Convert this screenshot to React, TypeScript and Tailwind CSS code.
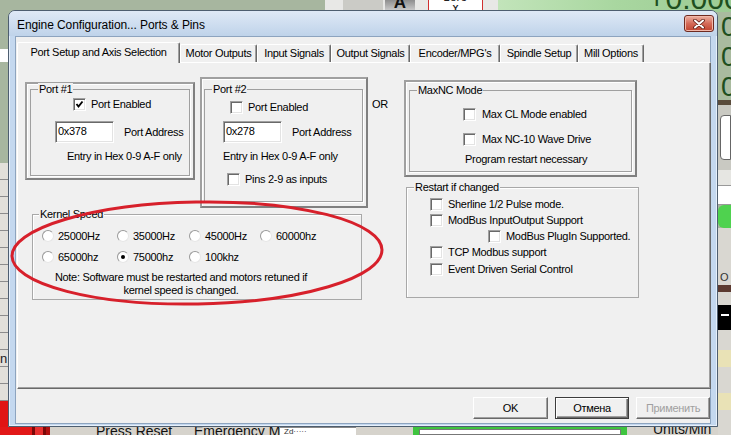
import React from "react";

function Check({ checked = false }: { checked?: boolean }) {
  return (
    <span className="relative inline-block w-[13px] h-[13px] shrink-0 bg-white border border-t-[#a0a0a0] border-l-[#a0a0a0] border-r-white border-b-white shadow-[inset_1px_1px_0_#696969,inset_-1px_-1px_0_#e3e3e3]">
      {checked && (
        <svg className="absolute left-[1px] top-[1px]" width="9" height="9" viewBox="0 0 9 9">
          <path d="M1.5 4 L3.5 6.5 L7.5 1.5" stroke="#000" strokeWidth="1.9" fill="none" />
        </svg>
      )}
    </span>
  );
}

function Radio({ checked = false }: { checked?: boolean }) {
  return (
    <span className="inline-flex items-center justify-center w-[12px] h-[12px] shrink-0 rounded-full bg-white border border-t-[#9a9a9a] border-l-[#9a9a9a] border-r-[#e6e6e6] border-b-[#e6e6e6]">
      {checked && <span className="w-[4px] h-[4px] rounded-full bg-black" />}
    </span>
  );
}

function CheckRow({ label, checked = false, cls = "" }: { label: string; checked?: boolean; cls?: string }) {
  return (
    <div className={"flex items-center gap-[5px] h-[13px] " + cls}>
      <Check checked={checked} />
      <span className="whitespace-nowrap">{label}</span>
    </div>
  );
}

function RadioCell({ label, checked = false, w }: { label: string; checked?: boolean; w: string }) {
  return (
    <div className={"flex items-center gap-[4px] " + w}>
      <Radio checked={checked} />
      <span className="whitespace-nowrap">{label}</span>
    </div>
  );
}

function TextBox({ value }: { value: string }) {
  return (
    <div className="w-[59px] h-[22px] bg-white border border-t-[#a0a0a0] border-l-[#a0a0a0] border-r-white border-b-white shadow-[inset_1px_1px_0_#696969,inset_-1px_-1px_0_#e3e3e3] pl-[2px] pt-[3px]">
      {value}
    </div>
  );
}

function Label({ text, cls }: { text: string; cls: string }) {
  return <span className={"absolute -top-[7px] px-[1px] bg-[#f0f0f0] whitespace-nowrap leading-[13px] " + cls}>{text}</span>;
}

const tabs = [
  { label: "Motor Outputs", w: "w-[77px]" },
  { label: "Input Signals", w: "w-[74px]" },
  { label: "Output Signals", w: "w-[79px]" },
  { label: "Encoder/MPG's", w: "w-[90px]" },
  { label: "Spindle Setup", w: "w-[78px]" },
  { label: "Mill Options", w: "w-[66px]" },
];

function Background() {
  return (
    <>
      {/* top strip */}
      <div className="absolute left-[325px] top-0 w-[175px] h-[12px] bg-[#e8e8e6]" />
      <div className="absolute left-[343px] top-0 w-[40px] h-[12px] bg-[#cbcbc6]" />
      <div className="absolute left-[385px] top-0 w-[30px] h-[12px] bg-gradient-to-b from-[#8e8e8e] to-[#d4d4d4] flex justify-center overflow-hidden">
        <span className="text-[17px] font-bold leading-[17px] -mt-[6px] text-[#111]">A</span>
      </div>
      <div className="absolute left-[428px] top-0 w-[55px] h-[12px] bg-white border-x border-[#d03030] flex flex-col items-center overflow-hidden">
        <span className="text-[12px] leading-[12px] -mt-[9px] text-[#222]">zero</span>
        <span className="text-[9px] font-bold leading-[9px] mt-[1px] text-[#222]">Y</span>
      </div>
      <div className="absolute left-[498px] top-0 w-[233px] h-[12px] bg-gradient-to-r from-[#c2e4ba] via-[#a9d7a0] to-[#9ccb94] overflow-hidden">
        <span className="absolute left-[150px] -top-[16px] text-[30px] leading-[30px] text-[#1e4f1e] whitespace-nowrap">+0.000</span>
      </div>

      {/* left strip */}
      <div className="absolute left-0 top-0 w-[8px] h-[435px] flex flex-col">
        <div className="h-[49px]" />
        <div className="h-[13px] bg-white" />
        <div className="h-[101px]" />
        <div className="flex flex-col bg-[#e2e0da]">
          {Array.from({ length: 14 }).map((_, i) => (
            <div key={i} className="h-[17px] border-b border-[#8c8c8c] overflow-hidden text-[13px] leading-[17px] text-[#222]">
              {i === 11 ? "n" : ""}
            </div>
          ))}
        </div>
        <div className="flex-1 bg-[#e01414]" />
      </div>

      {/* bottom strip */}
      <div className="absolute left-0 top-[427px] w-[731px] h-[8px] flex bg-[#d6d3cc] overflow-hidden">
        <div className="w-[32px] bg-[#e21818]" />
        <div className="w-[3px] bg-[#7a0808]" />
        <div className="w-[8px] bg-[#e83030]" />
        <div className="w-[3px] bg-[#7a0808]" />
        <div className="w-[4px] bg-[#b01010]" />
        <div className="w-[46px]" />
        <span className="text-[14px] leading-[14px] -mt-[3px] text-[#111] whitespace-nowrap w-[98px]">Press Reset</span>
        <span className="text-[14px] leading-[14px] -mt-[3px] text-[#111] whitespace-nowrap w-[86px] overflow-hidden">Emergency M</span>
        <div className="w-[76px] bg-white border-t border-[#888] text-[8px] leading-[8px] pl-[4px] text-[#333]">Zd·····</div>
        <div className="w-[57px]" />
        <div className="w-[214px] bg-[#3fc43f] px-[6px] pt-[2px]">
          <div className="h-full bg-white border border-[#777]" />
        </div>
        <div className="w-[26px]" />
        <span className="text-[14px] leading-[14px] -mt-[5px] text-[#111] whitespace-nowrap">Units/Min</span>
      </div>

      {/* right strip */}
      <div className="absolute left-[718px] top-0 w-[13px] h-[435px] flex flex-col overflow-hidden">
        <div className="h-[12px]" />
        <div className="h-[88px] bg-[#a9bb9f] flex flex-col overflow-hidden pl-[3px] pt-[2px] gap-[4px]">
          <span className="text-[28px] leading-[26px] text-[#1e4f1e]">0</span>
          <span className="text-[28px] leading-[26px] text-[#1e4f1e]">0</span>
          <span className="text-[28px] leading-[26px] text-[#1e4f1e]">0</span>
        </div>
        <div className="h-[5px] bg-[#5a4c3c]" />
        <div className="h-[65px] bg-[#c9c9c2] pt-[10px] pl-[2px]">
          <div className="h-[45px] bg-white rounded-l-[4px] border border-[#666]" />
        </div>
        <div className="h-[15px] bg-[#e6e6e2]" />
        <div className="h-[20px] bg-white border-y border-[#999]" />
        <div className="h-[23px] bg-[#4fd24f] rounded-l-[6px]" />
        <div className="h-[57px] bg-[#d9d7d1] text-[11px] leading-[11px] pt-[44px] pl-[2px] text-[#333]">O</div>
        <div className="h-[7px] bg-[#5c3a30]" />
        <div className="h-[13px] bg-[#d9d7d1]" />
        <div className="h-[25px] bg-black pl-[3px] pt-[9px]">
          <div className="h-[2px] w-[8px] bg-white" />
        </div>
        <div className="h-[20px] bg-[#d9d7d1]" />
        <div className="h-[17px] bg-[#e9e2b6]" />
        <div className="h-[26px] bg-[#d9d7d1]" />
        <div className="h-[17px] bg-[#e9e2b6]" />
        <div className="flex-1 bg-[#d9d7d1]" />
      </div>
    </>
  );
}

export default function App() {
  return (
    <div className="relative w-[731px] h-[435px] overflow-hidden bg-[#a7b69f] font-['Liberation_Sans',Arial,sans-serif]">
      <Background />

      {/* Dialog window */}
      <div className="absolute left-[8px] top-[10px] w-[710px] h-[417px] flex flex-col rounded-t-[7px] border border-[#4e5e70] bg-[#c4d8ef] shadow-[inset_0_0_0_1px_#e6f0fb]">
        {/* title bar */}
        <div className="h-[25px] flex items-start justify-between rounded-t-[6px] bg-gradient-to-b from-[#dfe9f6] to-[#bfd3ea]">
          <span className="ml-[8px] mt-[7px] text-[12px] leading-[14px] tracking-[-0.1px] text-black">Engine Configuration... Ports &amp; Pins</span>
          <div className="mr-[3px] mt-[4px] w-[30px] h-[17px] rounded-[3px] border border-[#6e2a20] bg-gradient-to-b from-[#eab1a4] via-[#d46a58] to-[#c0422e] flex items-center justify-center shadow-[inset_0_0_0_1px_#f2b8aa]">
            <svg width="12" height="10" viewBox="0 0 12 10">
              <path d="M2 1.5 L10 8.5 M10 1.5 L2 8.5" stroke="#5b1a12" strokeWidth="3.6" strokeLinecap="round" />
              <path d="M2 1.5 L10 8.5 M10 1.5 L2 8.5" stroke="#ffffff" strokeWidth="2" strokeLinecap="round" />
            </svg>
          </div>
        </div>

        {/* client area */}
        <div className="mx-[6px] mb-[2px] flex-1 bg-[#f0f0f0] border border-[#8da4bf] flex flex-col text-[11px] leading-[13px] tracking-[-0.3px] text-black">
          {/* tabs */}
          <div className="ml-[1px] mt-[5px] h-[20px] flex items-end">
            <div className="relative z-10 -mb-[1px] w-[163px] h-[21px] bg-[#f0f0f0] border-t border-l border-r border-t-white border-l-white border-r-[#696969] shadow-[inset_-1px_0_0_#a0a0a0] rounded-t-[2px] flex items-center justify-center whitespace-nowrap pb-[1px]">
              Port Setup and Axis Selection
            </div>
            {tabs.map((t) => (
              <div
                key={t.label}
                className={
                  "h-[18px] border-t border-l border-r border-t-white border-l-white border-r-[#696969] shadow-[inset_-1px_0_0_#a0a0a0] rounded-t-[2px] flex items-center justify-center whitespace-nowrap " +
                  t.w
                }
              >
                {t.label}
              </div>
            ))}
          </div>

          {/* tab panel */}
          <div className="ml-[1px] w-[694px] h-[327px] border border-t-white border-l-white border-r-[#696969] border-b-[#696969] shadow-[inset_-1px_-1px_0_#a0a0a0] flex">
            {/* left column */}
            <div className="w-[386px] flex flex-col">
              <div className="flex items-start">
                {/* Port #1 */}
                <div className="ml-[7px] mt-[19px] w-[170px] h-[98px] border-2 border-t-[#a0a0a0] border-l-[#a0a0a0] border-r-[#808080] border-b-[#808080] shadow-[inset_1px_1px_0_#ffffff]">
                  <div className="relative ml-[3px] mt-[5px] w-[160px] h-[87px] border border-[#a0a0a0] shadow-[1px_1px_0_#ffffff]">
                    <Label text="Port #1" cls="left-[7px]" />
                    <CheckRow label="Port Enabled" checked cls="ml-[42px] mt-[8px]" />
                    <div className="flex items-center ml-[24px] mt-[10px]">
                      <TextBox value="0x378" />
                      <span className="ml-[10px] whitespace-nowrap">Port Address</span>
                    </div>
                    <div className="ml-[36px] mt-[7px] whitespace-nowrap">Entry in Hex 0-9 A-F only</div>
                  </div>
                </div>

                {/* Port #2 */}
                <div className="ml-[5px] mt-[14px] w-[168px] h-[131px] border-2 border-t-[#a0a0a0] border-l-[#a0a0a0] border-r-[#808080] border-b-[#808080] shadow-[inset_1px_1px_0_#ffffff]">
                  <div className="relative ml-[2px] mt-[10px] w-[159px] h-[113px] border border-[#a0a0a0] shadow-[1px_1px_0_#ffffff]">
                    <Label text="Port #2" cls="left-[7px]" />
                    <CheckRow label="Port Enabled" cls="ml-[25px] mt-[11px]" />
                    <div className="flex items-center ml-[18px] mt-[7px]">
                      <TextBox value="0x278" />
                      <span className="ml-[10px] whitespace-nowrap">Port Address</span>
                    </div>
                    <div className="ml-[18px] mt-[7px] whitespace-nowrap">Entry in Hex 0-9 A-F only</div>
                    <CheckRow label="Pins 2-9 as inputs" cls="ml-[22px] mt-[10px]" />
                  </div>
                </div>

                <div className="ml-[4px] mt-[35px]">OR</div>
              </div>

              {/* Kernel Speed */}
              <div className="relative ml-[14px] mt-[6px] w-[330px] h-[86px] border border-[#a8a8a8] shadow-[inset_1px_1px_0_#ffffff]">
                <Label text="Kernel Speed" cls="left-[6px]" />
                <div className="flex mt-[15px] ml-[9px] h-[12px]">
                  <RadioCell label="25000Hz" w="w-[75px]" />
                  <RadioCell label="35000Hz" w="w-[72px]" />
                  <RadioCell label="45000Hz" w="w-[71px]" />
                  <RadioCell label="60000hz" w="w-[80px]" />
                </div>
                <div className="flex mt-[9px] ml-[9px] h-[12px]">
                  <RadioCell label="65000hz" w="w-[75px]" />
                  <RadioCell label="75000hz" checked w="w-[72px]" />
                  <RadioCell label="100khz" w="w-[71px]" />
                </div>
                <div className="ml-[14px] mt-[8px] w-[268px] text-center">
                  Note: Software must be restarted and motors retuned if
                  <br />
                  kernel speed is changed.
                </div>
              </div>
            </div>

            {/* right column */}
            <div className="flex flex-col pt-[17px]">
              {/* MaxNC Mode */}
              <div className="w-[233px] h-[97px] border-2 border-t-[#a0a0a0] border-l-[#a0a0a0] border-r-[#808080] border-b-[#808080] shadow-[inset_1px_1px_0_#ffffff]">
                <div className="relative ml-[3px] mt-[8px] w-[223px] h-[82px] border border-[#a0a0a0] shadow-[1px_1px_0_#ffffff]">
                  <Label text="MaxNC Mode" cls="left-[7px]" />
                  <div className="flex items-center gap-[6px] h-[13px] ml-[53px] mt-[17px]">
                    <Check />
                    <span className="whitespace-nowrap">Max CL Mode enabled</span>
                  </div>
                  <div className="flex items-center gap-[6px] h-[13px] ml-[53px] mt-[12px]">
                    <Check />
                    <span className="whitespace-nowrap">Max NC-10 Wave Drive</span>
                  </div>
                  <div className="ml-[55px] mt-[7px] whitespace-nowrap">Program restart necessary</div>
                </div>
              </div>

              {/* Restart if changed */}
              <div className="relative ml-[2px] mt-[10px] w-[233px] h-[111px] border border-[#a8a8a8] shadow-[inset_1px_1px_0_#ffffff]">
                <Label text="Restart if changed" cls="left-[7px]" />
                <CheckRow label="Sherline 1/2 Pulse mode." cls="ml-[23px] mt-[10px]" />
                <CheckRow label="ModBus InputOutput Support" cls="ml-[23px] mt-[3px]" />
                <CheckRow label="ModBus PlugIn Supported." cls="ml-[81px] mt-[3px]" />
                <CheckRow label="TCP Modbus support" cls="ml-[23px] mt-[3px]" />
                <CheckRow label="Event Driven Serial Control" cls="ml-[23px] mt-[4px]" />
              </div>
            </div>
          </div>

          {/* buttons */}
          <div className="mt-[8px] flex justify-end">
            <div className="w-[75px] h-[22px] border border-t-white border-l-white border-r-[#696969] border-b-[#696969] shadow-[inset_-1px_-1px_0_#a0a0a0] flex items-center justify-center">
              OK
            </div>
            <div className="ml-[7px] w-[74px] h-[22px] border border-[#3c3c3c] shadow-[inset_1px_1px_0_#ffffff,inset_-1px_-1px_0_#696969,inset_-2px_-2px_0_#a0a0a0] flex items-center justify-center">
              Отмена
            </div>
            <div className="ml-[7px] w-[74px] h-[22px] border border-t-white border-l-white border-r-[#696969] border-b-[#696969] shadow-[inset_-1px_-1px_0_#a0a0a0] flex items-center justify-center text-[#a0a0a0]">
              Применить
            </div>
          </div>
        </div>
      </div>

      {/* red annotation ellipse */}
      <svg className="absolute left-0 top-0 pointer-events-none" width="731" height="435" viewBox="0 0 731 435">
        <ellipse cx="197" cy="253" rx="185" ry="51" fill="none" stroke="#d7202b" strokeWidth="3" transform="rotate(-1 197 253)" />
      </svg>
    </div>
  );
}
